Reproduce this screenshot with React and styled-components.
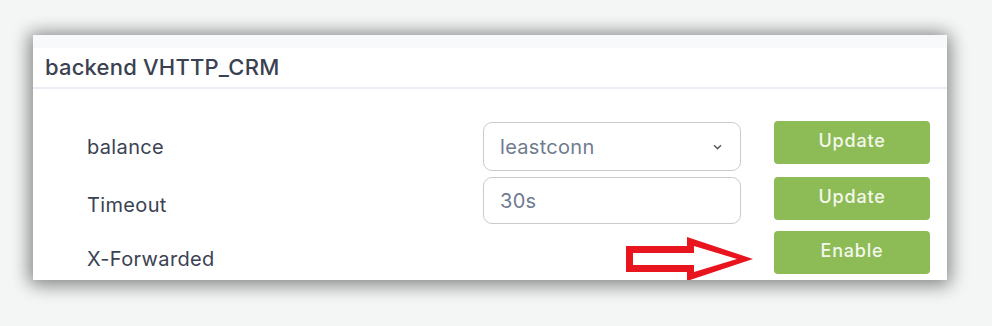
import React from "react";
import styled, { createGlobalStyle } from "styled-components";

const Global = createGlobalStyle`
  html, body { margin: 0; padding: 0; background: #f3f6f5; }
  body { font-family: Inter, "Noto Sans", sans-serif; }
  * { box-sizing: border-box; }
`;

const Page = styled.div`
  width: 992px;
  height: 326px;
  padding: 35px 0 0 33px;
  background: #f3f6f5;
`;

const Card = styled.section`
  position: relative;
  width: 914px;
  height: 245px;
  background: #ffffff;
  overflow: hidden;
  box-shadow: -2px 0 16px 3px rgba(0, 0, 0, 0.3), 2px 4px 18px 2px rgba(0, 0, 0, 0.24);
`;

const TopStrip = styled.div`
  height: 13px;
  background: #f7f9fb;
`;

const Header = styled.header`
  height: 41px;
  display: flex;
  align-items: center;
  padding: 0 0 2px 12px;
  border-bottom: 2px solid #e9eef4;
  font-size: 22px;
  font-weight: 500;
  letter-spacing: 0.2px;
  color: #3a4151;
`;

const Body = styled.div`
  padding: 32px 17px 0 54px;
`;

const Row = styled.div`
  display: grid;
  grid-template-columns: 396px 258px 1fr;
  align-items: start;
  height: ${(p) => p.$h}px;
`;

const Label = styled.div`
  padding-top: ${(p) => p.$pt}px;
  font-size: 20px;
  letter-spacing: 0.35px;
  color: #3b4252;
  line-height: 22px;
`;

const SelectBox = styled.div`
  margin-top: 1px;
  height: 49px;
  border: 1.5px solid #c9cccf;
  border-radius: 9px;
  display: flex;
  align-items: center;
  justify-content: space-between;
  padding: 0 18px 0 16px;
  font-size: 20px;
  letter-spacing: 0.3px;
  color: #6f7b90;
`;

const TextInput = styled.input`
  height: 47px;
  width: 100%;
  border: 1.5px solid #c9cccf;
  border-radius: 9px;
  padding: 0 16px;
  font-family: inherit;
  font-size: 20px;
  letter-spacing: 0.3px;
  color: #6f7b90;
  background: #fff;
  outline: none;
`;

const ActionButton = styled.button`
  justify-self: end;
  width: 156px;
  height: 43px;
  border: none;
  border-radius: 4px;
  background: #8dbb55;
  color: #f3f8ec;
  font-family: inherit;
  font-size: 18px;
  font-weight: 500;
  letter-spacing: 0.8px;
  padding: 0 0 4px;
  cursor: pointer;
`;

const Arrow = styled.svg`
  position: absolute;
  left: 0;
  top: 0;
  pointer-events: none;
`;

const Chevron = () => (
  <svg width="9" height="6" viewBox="0 0 9 6">
    <path d="M1 1.2 L4.5 4.6 L8 1.2" fill="none" stroke="#5a5f66" strokeWidth="1.5" />
  </svg>
);

export default function App() {
  // arrow coordinates relative to card (card origin at 33,35)
  const ox = 33;
  const oy = 35;
  const outer = [
    [626, 246], [687, 246], [687, 237], [753, 259], [687, 281], [687, 272], [626, 272],
  ].map(([x, y]) => `${x - ox},${y - oy}`).join(" ");
  const inner = [
    [633, 253], [694, 253], [694, 246], [737, 259], [694, 272], [694, 265], [633, 265],
  ].map(([x, y]) => `${x - ox},${y - oy}`).join(" ");

  return (
    <Page>
      <Global />
      <Card>
        <TopStrip />
        <Header>backend VHTTP_CRM</Header>
        <Body>
          <Row $h={56}>
            <Label $pt={15}>balance</Label>
            <SelectBox>
              <span>leastconn</span>
              <Chevron />
            </SelectBox>
            <ActionButton>Update</ActionButton>
          </Row>
          <Row $h={54}>
            <Label $pt={17}>Timeout</Label>
            <TextInput value="30s" readOnly />
            <ActionButton>Update</ActionButton>
          </Row>
          <Row $h={50}>
            <Label $pt={17}>X-Forwarded</Label>
            <span />
            <ActionButton>Enable</ActionButton>
          </Row>
        </Body>
        <Arrow width="914" height="245" viewBox="0 0 914 245">
          <polygon points={outer} fill="#e8141e" />
          <polygon points={inner} fill="#ffffff" />
        </Arrow>
      </Card>
    </Page>
  );
}
